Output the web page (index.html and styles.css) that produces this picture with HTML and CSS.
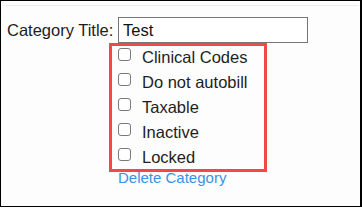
FILE: index.html
```html
<!DOCTYPE html>
<html>
<head>
<meta charset="utf-8">
<link rel="stylesheet" href="styles.css">
</head>
<body>
<div class="frame">
  <div class="panel">
    <div class="form">
      <label class="title-label" for="title">Category Title:</label>
      <input class="title-input" id="title" type="text" value="Test">
      <div class="options">
        <div class="opt"><input type="checkbox" id="c1"><label for="c1">Clinical Codes</label></div>
        <div class="opt"><input type="checkbox" id="c2"><label for="c2">Do not autobill</label></div>
        <div class="opt"><input type="checkbox" id="c3"><label for="c3">Taxable</label></div>
        <div class="opt"><input type="checkbox" id="c4"><label for="c4">Inactive</label></div>
        <div class="opt"><input type="checkbox" id="c5"><label for="c5">Locked</label></div>
      </div>
      <a class="delete" href="#">Delete Category</a>
    </div>
  </div>
</div>
</body>
</html>
```
FILE: styles.css
```css
html, body {
  margin: 0;
  padding: 0;
  background: #ffffff;
}
.frame {
  box-sizing: border-box;
  width: 362px;
  height: 207px;
  border: 1px solid #000;
  border-right-width: 2px;
  background: #fdfdfd;
  font-family: "Liberation Sans", Arial, sans-serif;
  color: #1e1e1e;
  padding-top: 4px;
}
.panel {
  margin-left: 5px;
  margin-right: 1px;
  border-top: 1px solid #ebebeb;
  padding-top: 11px;
}
.form {
  display: grid;
  grid-template-columns: 112px 190px;
  align-items: baseline;
}
.title-label {
  padding-left: 1px;
  font-size: 16.5px;
}
.title-input {
  box-sizing: border-box;
  width: 190px;
  height: 26px;
  margin: 0;
  padding: 0 4px;
  border: 1px solid #767676;
  border-radius: 0;
  background: #fff;
  font-family: "Liberation Sans", Arial, sans-serif;
  font-size: 16.5px;
  color: #111;
  outline: none;
}
.options {
  grid-column: 2;
  position: relative;
  margin-top: 3px;
}
.options::after {
  content: "";
  position: absolute;
  box-sizing: border-box;
  left: -9px;
  top: -3px;
  width: 158px;
  height: 129px;
  border: 3px solid #f24848;
  pointer-events: none;
}
.opt {
  display: flex;
  align-items: flex-start;
  height: 25px;
}
.opt input {
  -webkit-appearance: none;
  appearance: none;
  box-sizing: border-box;
  width: 13px;
  height: 13px;
  margin: 2px 11px 0 0;
  border: 1px solid #7a7a7a;
  border-radius: 3px;
  background: #fff;
}
.opt label {
  font-size: 16.5px;
  line-height: 22px;
}
.delete {
  grid-column: 2;
  font-size: 15px;
  line-height: 14px;
  color: #3893e4;
  text-decoration: none;
}
```
